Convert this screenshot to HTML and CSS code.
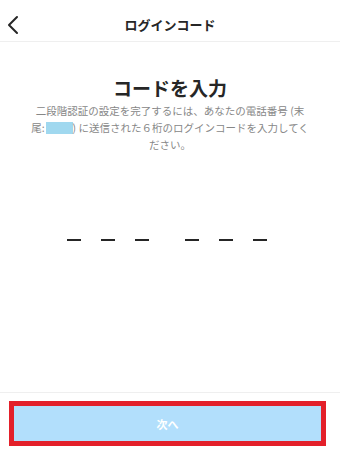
FILE: index.html
```html
<!DOCTYPE html>
<html lang="ja">
<head>
<meta charset="utf-8">
<link rel="stylesheet" href="styles.css">
</head>
<body>
<div class="screen">
  <header class="header">
    <svg class="back" width="14" height="22" viewBox="0 0 14 22"><polyline points="11,3 3,11 11,19" fill="none" stroke="#262626" stroke-width="2" stroke-linecap="round" stroke-linejoin="round"/></svg>
    <div class="header-title">ログインコード</div>
  </header>
  <main class="main">
    <h1 class="title">コードを入力</h1>
    <p class="desc">二段階認証の設定を完了するには、あなたの電話番号 (末<br>尾:<span class="redact"></span>) に送信された６桁のログインコードを入力してく<br>ださい。</p>
    <div class="code">
      <div class="group"><span class="dash"></span><span class="dash"></span><span class="dash"></span></div>
      <div class="group"><span class="dash"></span><span class="dash"></span><span class="dash"></span></div>
    </div>
  </main>
  <footer class="footer">
    <div class="button">次へ</div>
  </footer>
</div>
</body>
</html>
```
FILE: styles.css
```css
html, body {
  margin: 0;
  padding: 0;
  background: #fff;
}
.screen {
  width: 340px;
  height: 454px;
  display: flex;
  flex-direction: column;
  font-family: "Noto Sans CJK JP", "Noto Sans", sans-serif;
  color: #262626;
}
.header {
  position: relative;
  height: 42px;
  box-sizing: border-box;
  padding-top: 8px;
  border-bottom: 1px solid #efefef;
  display: flex;
  align-items: center;
  justify-content: center;
}
.back {
  position: absolute;
  left: 6px;
  top: 14px;
}
.header-title {
  font-size: 13px;
  font-weight: 700;
  line-height: 34px;
  height: 34px;
}
.main {
  flex: 1;
  display: flex;
  flex-direction: column;
  align-items: center;
  padding-top: 34px;
}
.title {
  margin: 0;
  font-size: 19px;
  font-weight: 700;
  line-height: 24px;
}
.desc {
  margin: 2px 0 0;
  font-size: 10.5px;
  line-height: 17px;
  color: #878787;
  text-align: center;
  white-space: nowrap;
}
.redact {
  display: inline-block;
  width: 27px;
  height: 12px;
  margin-left: 1px;
  background: #a0d8ef;
  vertical-align: -2px;
}
.code {
  margin-top: 86px;
  display: flex;
  gap: 36px;
  padding-right: 6px;
}
.group {
  display: flex;
  gap: 20px;
}
.dash {
  display: block;
  width: 14px;
  height: 2px;
  background: #262626;
}
.footer {
  border-top: 1px solid #efefef;
  padding: 8px 14px 8px 9px;
}
.button {
  box-sizing: border-box;
  height: 45px;
  border: 5px solid #e3202a;
  background: #b2dffc;
  color: #fff;
  font-size: 11px;
  font-weight: 700;
  display: flex;
  align-items: center;
  justify-content: center;
}
```
